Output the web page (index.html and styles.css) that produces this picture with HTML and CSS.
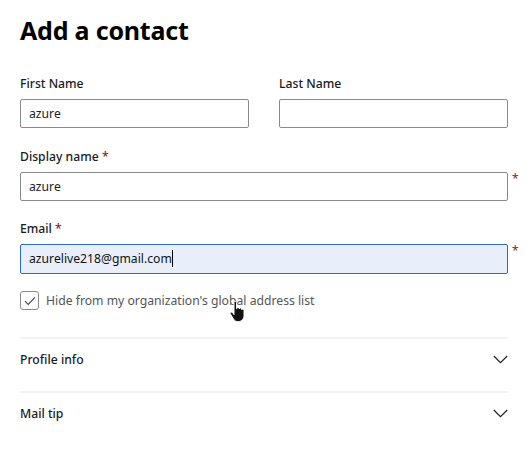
FILE: index.html
```html
<!DOCTYPE html>
<html lang="en">
<head>
<meta charset="utf-8">
<title>Add a contact</title>
<link rel="stylesheet" href="styles.css">
</head>
<body>
<main class="panel">
  <h1 class="title">Add a contact</h1>

  <div class="name-row">
    <div class="field">
      <label class="label">First Name</label>
      <div class="input-wrap"><div class="input">azure</div></div>
    </div>
    <div class="field">
      <label class="label">Last Name</label>
      <div class="input-wrap"><div class="input"></div></div>
    </div>
  </div>

  <div class="field field-wide">
    <label class="label">Display name <span class="req">*</span></label>
    <div class="input-wrap"><div class="input">azure</div><span class="req req-side">*</span></div>
  </div>

  <div class="field field-wide field-email">
    <label class="label">Email <span class="req">*</span></label>
    <div class="input-wrap"><div class="input input-focus">azurelive218@gmail.com<span class="caret"></span></div><span class="req req-side">*</span></div>
  </div>

  <div class="check-row">
    <span class="checkbox">
      <svg width="12" height="10" viewBox="0 0 12 10"><path d="M1 5.2 L4.2 8.4 L11 1.4" fill="none" stroke="#444" stroke-width="1.1"/></svg>
    </span>
    <span class="check-text">Hide from my organization's global address list</span>
    <svg class="cursor" width="18" height="22" viewBox="0 0 18 22">
      <path d="M5 1.5c0-.8.6-1.3 1.3-1.3s1.3.5 1.3 1.3v6.2l.3-.1c0-.8.6-1.2 1.2-1.2s1.2.5 1.2 1.2v.4c.1-.6.6-1 1.2-1s1.2.5 1.2 1.2v.6c.2-.5.6-.8 1.1-.8.7 0 1.2.5 1.2 1.2v5.2c0 3.4-2.2 6.1-5.5 6.1H8.4c-1.7 0-2.9-.9-3.8-2.3L1.4 13c-.4-.6-.2-1.3.4-1.7.6-.3 1.3-.2 1.7.3L5 13.6z" fill="#111" stroke="#fff" stroke-width="1"/>
    </svg>
  </div>

  <section class="accordion">
    <div class="acc-item">
      <span class="acc-title">Profile info</span>
      <svg class="chev" width="15" height="9" viewBox="0 0 15 9"><path d="M0.8 1 L7.5 7.7 L14.2 1" fill="none" stroke="#222" stroke-width="1.2"/></svg>
    </div>
    <div class="acc-item">
      <span class="acc-title">Mail tip</span>
      <svg class="chev" width="15" height="9" viewBox="0 0 15 9"><path d="M0.8 1 L7.5 7.7 L14.2 1" fill="none" stroke="#222" stroke-width="1.2"/></svg>
    </div>
  </section>
</main>
</body>
</html>
```

FILE: styles.css
```css
* { box-sizing: border-box; }
html, body { margin: 0; background: #fff; }
body {
  font-family: "Noto Sans", "Open Sans", sans-serif;
  color: #1b1b1b;
  width: 530px;
  height: 475px;
  overflow: hidden;
}
.panel {
  padding: 13px 22px 0 20px;
  width: 530px;
}
.title {
  margin: 0;
  font-size: 25px;
  font-weight: 700;
  line-height: 34px;
  color: #000;
  letter-spacing: -0.2px;
}
.name-row {
  display: grid;
  grid-template-columns: 1fr 1fr;
  column-gap: 30px;
  margin-top: 28px;
  width: 488px;
}
.field { display: flex; flex-direction: column; }
.label {
  font-size: 12.2px;
  line-height: 17px;
  font-weight: 500;
  color: #1b1b1b;
  margin-bottom: 7px;
}
.req { color: #8c1f25; }
.input-wrap { position: relative; display: flex; }
.input {
  flex: 1;
  height: 29px;
  border: 1px solid #8a8a8a;
  border-radius: 2px;
  font-size: 12.2px;
  line-height: 27px;
  padding: 0 8px;
  color: #222;
  background: #fff;
}
.field-wide { margin-top: 20px; width: 488px; }
.field-wide.field-email { margin-top: 19px; }
.req-side {
  position: absolute;
  left: 492px;
  top: 0;
  font-size: 12px;
  line-height: 14px;
}
.input-focus {
  height: 30px;
  line-height: 28px;
  background: #e8effb;
  border-color: #2e6cc1;
  color: #111;
}
.caret {
  display: inline-block;
  width: 1px;
  height: 17px;
  background: #000;
  vertical-align: -4px;
}
.check-row {
  position: relative;
  display: flex;
  align-items: center;
  gap: 7px;
  margin-top: 17px;
  height: 19px;
}
.checkbox {
  width: 19px;
  height: 19px;
  border: 1px solid #8a8a8a;
  border-radius: 3px;
  display: flex;
  align-items: center;
  justify-content: center;
}
.check-text {
  font-size: 12.2px;
  color: #555;
}
.cursor {
  position: absolute;
  left: 209px;
  top: 10px;
}
.accordion {
  margin-top: 27px;
  width: 488px;
}
.acc-item {
  display: flex;
  align-items: center;
  justify-content: space-between;
  height: 54px;
  border-top: 2px solid #f2f2f2;
  padding-bottom: 12px;
}
.acc-title {
  font-size: 12.2px;
  font-weight: 500;
  color: #1b1b1b;
}
```
